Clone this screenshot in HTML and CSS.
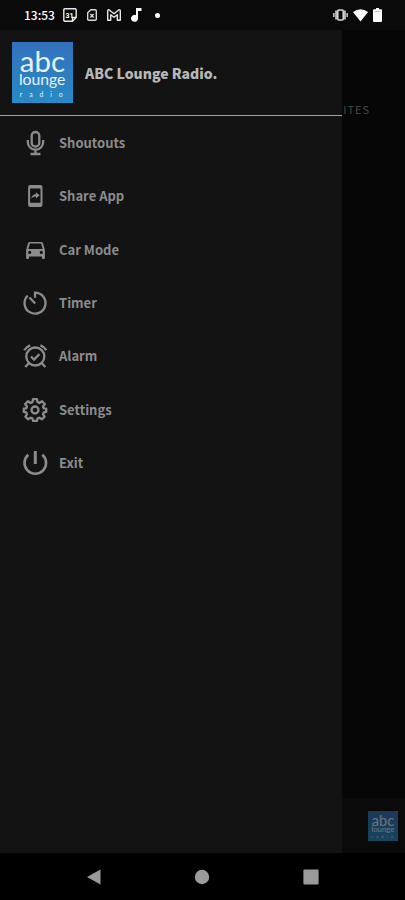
FILE: index.html
```html
<!DOCTYPE html>
<html lang="en">
<head>
<meta charset="utf-8">
<meta name="viewport" content="width=device-width, initial-scale=1">
<title>ABC Lounge Radio</title>
<link rel="stylesheet" href="styles.css">
</head>
<body>
<svg class="defs" width="0" height="0" aria-hidden="true">
  <defs>
    <linearGradient id="sky" x1="0" y1="0" x2="0" y2="1">
      <stop offset="0" stop-color="#3470bd"/>
      <stop offset="1" stop-color="#268bc4"/>
    </linearGradient>
    <symbol id="logo" viewBox="0 0 62 62">
      <rect width="62" height="62" fill="url(#sky)"/>
      <g fill="#e4f2fb">
        <text class="logo-abc" x="8" y="30">abc</text>
        <text class="logo-lounge" x="7" y="44">lounge</text>
        <text class="logo-radio" x="8" y="56">radio</text>
      </g>
    </symbol>
  </defs>
</svg>

<header class="status">
  <time class="clock">13:53</time>
  <div class="notices">
    <svg width="14" height="14" viewBox="0 0 14 14" fill="none" stroke="#e8e8e8" stroke-width="1.4"><path d="M2 .8h10q1.200 0 1.200 1.200v7.500L9.500 13.200H2Q.8 13.200.8 12V2Q.8.8 2 .8z"/><path d="M13 9.500H9.500V13"/><text class="date" x="2.500" y="9.500" fill="#fff" stroke="none">31</text></svg>
    <svg width="10" height="12" viewBox="0 0 10 12" fill="none" stroke="#d8d8d8" stroke-width="1.400"><path d="M3.800.7H8.300q1 0 1 1v8.600q0 1-1 1H1.700q-1 0-1-1V3.800z"/><path d="M3.300 5l3.400 3.600M6.700 5L3.300 8.600"/></svg>
    <svg width="14" height="12" viewBox="0 0 14 12" fill="none" stroke="#e8e8e8" stroke-width="1.400" stroke-linejoin="round"><path d="M.7 11.200V2Q.7.700 2 .8L7 4.700 12 .8q1.300-.1 1.300 1.200v9.200h-3V5.800L7 8.300 3.700 5.800v5.400z"/></svg>
    <svg width="11" height="14" viewBox="0 0 11 14" fill="#fff"><path d="M5 0h5.500v3H7v7.200A3.500 3.500 0 1 1 5 7.200z"/></svg>
    <span class="dot"></span>
  </div>
  <div class="system">
    <svg width="15" height="12" viewBox="0 0 15 12"><path d="M3.200 1.500v9M11.800 1.500v9" stroke="#bbb" stroke-width="2.200"/><path d="M.8 4v4M14.200 4v4" stroke="#bbb" stroke-width="1.600"/><rect x="4.800" y="1" width="5.400" height="10" rx="1" fill="none" stroke="#ddd" stroke-width="1.500"/></svg>
    <svg width="15" height="13" viewBox="0 0 15 13" fill="#fff"><path d="M0 3Q7.500-2.600 15 3L7.500 12.500z"/></svg>
    <svg width="9" height="14" viewBox="0 0 9 14" fill="#fff"><path d="M3 0h3v1.300h2q1 0 1 1V13q0 1-1 1H1q-1 0-1-1V2.300q0-1 1-1h2z"/><path d="M1.500 3.500h6" stroke="#aaa" stroke-width=".7"/></svg>
  </div>
</header>

<div class="stage">
  <aside class="drawer">
    <div class="brand">
      <svg class="logo" role="img" aria-label="ABC Lounge Radio"><use href="#logo"/></svg>
      <h1>ABC Lounge Radio.</h1>
    </div>
    <nav class="menu">
      <button type="button"><svg viewBox="0 0 24 24"><rect x="8.700" y="1" width="7.600" height="14.500" rx="3.800"/><path d="M4.800 9V11a7.700 7.700 0 0 0 15.400 0V9M12.500 18.700V23M7.500 23h10"/></svg>Shoutouts</button>
      <button type="button"><svg viewBox="0 0 24 24"><path class="solid" fill-rule="evenodd" d="M7.300 1h10q2.200 0 2.200 2.200v17.600q0 2.200-2.200 2.200h-10q-2.200 0-2.200-2.200V3.200Q5.100 1 7.300 1zM7.100 4.600v14.200h10.400V4.600z"/><path class="solid" d="M8.300 14.800c.4-3 2-4.500 4.600-4.800V8.200l3.800 3.100-3.800 3.100v-1.900c-2 0-3.500.7-4.600 2.300z"/></svg>Share App</button>
      <button type="button"><svg viewBox="0 0 24 24"><path class="solid" fill-rule="evenodd" d="M6.900 4h11.200q1.400 0 1.900 1.300l1.900 6.700v8q0 1-1 1h-1q-1 0-1-1v-1.500H6.100V20q0 1-1 1h-1q-1 0-1-1v-8L5 5.300Q5.500 4 6.900 4zM7 5.600L5.300 11h14.400L18 5.600zM6.700 12.800a1.600 1.600 0 1 0 0 3.200 1.600 1.600 0 0 0 0-3.200zM18.300 12.800a1.600 1.600 0 1 0 0 3.200 1.600 1.600 0 0 0 0-3.200z"/></svg>Car Mode</button>
      <button type="button"><svg viewBox="0 0 24 24"><path d="M12 6.700V1.600A10.500 10.500 0 1 1 4.800 4.500M6.500 6.500l5.700 6"/></svg>Timer</button>
      <button type="button"><svg viewBox="0 0 24 24"><circle cx="12.300" cy="12.500" r="9"/><path d="M8 12.500l3 3 5.400-5.400M1.200 6.200Q3.200 2.700 7.200 1.300M23.400 6.200Q21.400 2.700 17.400 1.300M5.800 19.200L2.300 23M18.800 19.200L22.300 23"/></svg>Alarm</button>
      <button type="button"><svg viewBox="0 0 24 24"><path stroke-linejoin="round" d="M10 1.200h4l.6 3 1.800.8 2.600-1.800 2.800 2.800L20 8.600l.7 1.700 2.500.4v3.200l-2.500.5-.7 1.700 1.600 2.500-2.600 2.700-2.600-1.600-1.800.7-.6 2.400h-4l-.6-2.400-1.800-.7L5 21.300l-2.600-2.700L4 16.100l-.7-1.700-2.500-.5v-3.200l2.500-.4L4 8.600 2.200 6 5 3.200 7.600 5l1.800-.8z"/><circle cx="12" cy="12" r="3.500"/></svg>Settings</button>
      <button type="button"><svg viewBox="0 0 24 24"><path stroke-width="2.600" d="M5.300 3.700a10.800 10.800 0 1 0 14 0"/><path stroke-width="3" d="M12.300 0v13"/></svg>Exit</button>
    </nav>
  </aside>
  <main class="behind">
    <span class="tab">ITES</span>
    <div class="player"><svg class="mini" role="img" aria-label="ABC Lounge Radio"><use href="#logo"/></svg></div>
  </main>
</div>

<footer class="softkeys">
  <button type="button" aria-label="Back"><svg width="16" height="16" viewBox="0 0 16 16"><path d="M14.500.500v15L1 8z"/></svg></button>
  <button type="button" aria-label="Home"><svg width="16" height="16" viewBox="0 0 16 16"><circle cx="8" cy="8" r="7.200"/></svg></button>
  <button type="button" aria-label="Recent apps"><svg width="16" height="16" viewBox="0 0 16 16"><rect x=".4" y=".4" width="15.200" height="15.200" rx="1"/></svg></button>
</footer>
</body>
</html>
```
FILE: styles.css
```css
* {
  box-sizing: border-box;
}

body {
  margin: 0;
  min-height: 100vh;
  display: flex;
  flex-direction: column;
  background: #000;
  color: #8c8c8e;
  font-family: "Noto Sans CJK SC", "Noto Sans", sans-serif;
}

button {
  border: 0;
  padding: 0;
  background: none;
  color: inherit;
  font: inherit;
  cursor: pointer;
}

svg {
  display: block;
  flex: none;
}

.defs {
  position: absolute;
}

.logo-abc,
.logo-lounge,
.logo-radio {
  font-family: Lato, sans-serif;
}

.logo-abc {
  font-size: 30px;
}

.logo-lounge {
  font-size: 16px;
}

.logo-radio {
  font-size: 7px;
  letter-spacing: 7px;
}

/* Status bar */
.status {
  height: 30px;
  padding: 0 23px 0 24px;
  display: flex;
  align-items: center;
  background: #0a0a0a;
  color: #fff;
}

.clock {
  font-size: 12px;
  line-height: 16px;
  font-weight: 500;
}

.notices,
.system {
  display: flex;
  align-items: center;
}

.notices {
  gap: 10px;
  margin-left: 8px;
}

.date {
  font: bold 7px Roboto, sans-serif;
}

.dot {
  width: 5px;
  height: 5px;
  margin-left: 3px;
  border-radius: 50%;
  background: #fff;
}

.system {
  gap: 5px;
  margin-left: auto;
}

/* Drawer over the dimmed page */
.stage {
  flex: 1;
  display: flex;
}

.drawer {
  flex: none;
  width: 84.5%;
  background: #131313;
}

.brand {
  display: flex;
  align-items: center;
  gap: 12px;
  padding: 12px;
  border-bottom: 1px solid #a5a5a5;
}

.logo {
  width: 61px;
  height: 61px;
}

h1 {
  margin: 0;
  color: #b8b8b8;
  font-size: 14px;
  line-height: 20px;
  font-weight: 900;
}

.menu {
  min-height: 374px;
  display: grid;
  grid-auto-rows: 1fr;
}

.menu button {
  display: flex;
  align-items: center;
  gap: 12px;
  padding: 0 23px;
  font-size: 13px;
  line-height: 20px;
  font-weight: bold;
}

.menu svg {
  width: 24px;
  height: 24px;
  overflow: visible;
  fill: none;
  stroke: currentColor;
  stroke-width: 2.3;
}

.menu .solid {
  fill: currentColor;
  stroke: none;
}

.behind {
  flex: 1;
  display: flex;
  flex-direction: column;
  justify-content: space-between;
  background: #060606;
}

.tab {
  margin-top: 69px;
  padding-left: 1px;
  color: #484848;
  font-size: 11px;
  line-height: 20px;
  letter-spacing: 1px;
}

.player {
  display: flex;
  justify-content: flex-end;
  padding: 13px 7px 12px;
  background: #0a0a0a;
}

.mini {
  width: 30px;
  height: 30px;
  opacity: 0.45;
}

/* System navigation */
.softkeys {
  height: 47px;
  padding: 0 40px;
  display: flex;
  align-items: center;
  background: #000;
}

.softkeys button {
  flex: 1;
  height: 47px;
  display: flex;
  align-items: center;
  justify-content: center;
}

.softkeys svg {
  fill: #9b9b9b;
}
```
